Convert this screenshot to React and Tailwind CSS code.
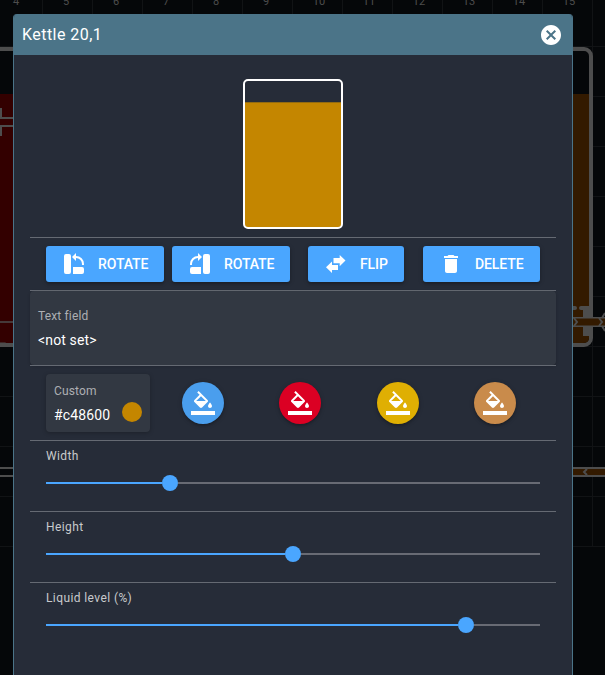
import React from "react";

const PATHS = {
  rotateLeft:
    "M4,2H7A2,2 0 0,1 9,4V20A2,2 0 0,1 7,22H4A2,2 0 0,1 2,20V4A2,2 0 0,1 4,2M20,15A2,2 0 0,1 22,17V20A2,2 0 0,1 20,22H11V15H20M14,4A8,8 0 0,1 22,12L21.94,13H19.92L20,12A6,6 0 0,0 14,6V9L10,5L14,1V4Z",
  rotateRight:
    "M10,4V1L14,5L10,9V6A6,6 0 0,0 4,12L4.08,13H2.06L2,12A8,8 0 0,1 10,4M17,2H20A2,2 0 0,1 22,4V20A2,2 0 0,1 20,22H17A2,2 0 0,1 15,20V4A2,2 0 0,1 17,2M4,15H13V22H4A2,2 0 0,1 2,20V17A2,2 0 0,1 4,15Z",
  flip: "M8,9.5V13H14V18H8V21L2,15.2ZM21.5,8.6L15.7,3V6H9.5V11.2H15.7V14.2Z",
  trash: "M6 19c0 1.1.9 2 2 2h8c1.100 0 2-.9 2-2V7H6v12zM19 4h-3.500l-1-1h-5l-1 1H5v2h14V4z",
  fill: "M16.560 8.940L7.620 0 6.210 1.410l2.380 2.380-5.150 5.150c-.59.59-.59 1.540 0 2.120l5.500 5.500c.29.29.68.44 1.060.44s.77-.15 1.060-.44l5.500-5.500c.59-.58.59-1.530 0-2.120zM5.210 10L10 5.210 14.790 10H5.210zM19 11.500s-2 2.170-2 3.500c0 1.100.9 2 2 2s2-.9 2-2c0-1.330-2-3.500-2-3.500zM0 20h24v4H0z",
  close:
    "M12 2C6.470 2 2 6.470 2 12s4.470 10 10 10 10-4.470 10-10S17.530 2 12 2zm5 13.590L15.590 17 12 13.410 8.410 17 7 15.590 10.590 12 7 8.410 8.410 7 12 10.590 15.590 7 17 8.410 13.410 12 17 15.590z",
};

function Icon({ name, className = "size-6" }) {
  return (
    <svg viewBox="0 0 24 24" className={`${className} shrink-0 fill-current`}>
      <path d={PATHS[name]} />
    </svg>
  );
}

// Dimmed brewery plan behind the dialog.
function Plan() {
  const cols = Array.from({ length: 12 }, (_, i) => i);
  return (
    <svg className="absolute inset-0" width="605" height="675" viewBox="0 0 605 675">
      <rect width="605" height="675" fill="#050709" />
      {cols.map((i) => (
        <rect key={i} x={42 + i * 50} y="0" width="1" height="546" fill="#111315" />
      ))}
      {cols.slice(0, 11).map((i) => (
        <rect key={i} x="0" y={46 + i * 50} width="605" height="1" fill="#111315" />
      ))}
      {cols.map((i) => (
        <text key={i} x={16 + i * 50 + (i > 5 ? 3 : 0)} y="5" textAnchor="middle" fontSize="11" fill="#4d4d4d" fontFamily="Roboto">
          {i + 4}
        </text>
      ))}
      <g>
        <rect x="-100" y="49" width="130" height="296" rx="7" fill="#050709" stroke="#4d4d4d" strokeWidth="4" />
        <rect x="0" y="94" width="20" height="249" fill="#330000" />
        <path d="M1 108V118H14M1 136V126H14" fill="none" stroke="#4d4d4d" strokeWidth="2" />
        <path d="M0 322H14" stroke="#4d4d4d" strokeWidth="1.500" />
        <path d="M0 343H5L14 346" fill="none" stroke="#4d4d4d" strokeWidth="1" />
        <path d="M0 468H14M0 476H14" stroke="#4d4d4d" strokeWidth="2" />
      </g>
      <g>
        <rect x="450" y="49" width="141" height="296" rx="7" fill="#050709" stroke="#4d4d4d" strokeWidth="4" />
        <path d="M560 94H589V306H560ZM560 306H583V343H560ZM583 336H589V338Q589 343 583 343Z" fill="#331a00" />
        <path d="M570 308H575M581 308H589" stroke="#4d4d4d" strokeWidth="4" strokeLinecap="round" />
        <path d="M583 306H590V336H583Z" fill="#4d4d4d" />
        <path d="M573 317H605V327H573Z" fill="#4d4d4d" />
        <path d="M573 318.500H605V325.500H573Z" fill="#331a00" />
        <path d="M574 318L577 322L574 326M599 318L602 322L599 326" fill="none" stroke="#4d4d4d" strokeWidth="2" />
        <path d="M605 313L602 318M605 331L602 326" stroke="#4d4d4d" strokeWidth="2" />
        <rect x="565" y="467" width="40" height="10" fill="#4d4d4d" />
        <rect x="565" y="469" width="40" height="6" fill="#331a00" />
        <path d="M587 469L584 472L587 475" fill="none" stroke="#4d4d4d" strokeWidth="2" />
      </g>
    </svg>
  );
}

function ActionButton({ icon, label, className }) {
  return (
    <button
      className={`flex h-9 items-center rounded-[3px] bg-[#4aa6ff] pl-4 text-[14px] font-medium tracking-[-0.1px] shadow-[0_1px_5px_rgba(0,0,0,0.2),0_2px_2px_rgba(0,0,0,0.14)] ${className}`}
    >
      <Icon name={icon} />
      <span className="ml-3">{label}</span>
    </button>
  );
}

function ColorButton({ className }) {
  return (
    <button
      className={`flex size-[42px] items-center justify-center rounded-full shadow-[0_1px_5px_rgba(0,0,0,0.2),0_2px_2px_rgba(0,0,0,0.14)] ${className}`}
    >
      <Icon name="fill" />
    </button>
  );
}

function SliderRow({ label, percent }) {
  return (
    <div className="h-[71px] border-t border-[#656a73] px-4 pt-[7px]">
      <div className="h-4 text-[12px] leading-4 tracking-[0.4px] text-[#c8cacc]">{label}</div>
      <div className="mt-[11px] flex h-4 items-center">
        <div className="h-0.5 bg-[#4aa6ff]" style={{ width: `calc(${percent}% - 8px)` }} />
        <div className="size-4 shrink-0 rounded-full bg-[#4aa6ff]" />
        <div className="h-0.5 flex-1 bg-[#686b74]" />
      </div>
    </div>
  );
}

export default function App() {
  return (
    <div className="relative h-[675px] w-[605px] overflow-hidden pl-[13px] pt-[14px] font-['Roboto',sans-serif] text-white">
      <Plan />
      <div className="relative h-[680px] w-[560px] overflow-hidden rounded-t border-x border-[#4b7488] bg-[#262c38]">
        <header className="flex h-[41px] items-center justify-between bg-[#4b7488] pl-2 pr-[9px]">
          <h1 className="text-[16px] font-normal tracking-[0.45px]">Kettle 20,1</h1>
          <Icon name="close" className="size-6" />
        </header>
        <main className="mx-4 pt-6">
          <div className="flex h-[158px] justify-center">
            <svg width="100" height="150" viewBox="0 0 100 150">
              <rect x="2" y="23.300" width="96" height="125" fill="#c48600" />
              <rect x="1" y="1" width="98" height="148" rx="4" fill="none" stroke="#fff" strokeWidth="2" />
            </svg>
          </div>
          <div className="flex h-[53px] border-t border-[#656a73] px-4 pt-2">
            <ActionButton icon="rotateLeft" label="ROTATE" className="w-[118px]" />
            <ActionButton icon="rotateRight" label="ROTATE" className="ml-2 w-[118px]" />
            <ActionButton icon="flip" label="FLIP" className="ml-[18px] w-24" />
            <ActionButton icon="trash" label="DELETE" className="ml-[19px] w-[117px]" />
          </div>
          <div className="h-[75px] border-t border-[#656a73]">
            <div className="h-[74px] rounded bg-[#323842] px-2 pt-4 shadow-[0_1px_3px_rgba(0,0,0,0.2)]">
              <div className="text-[12px] leading-[18px] tracking-[0.15px] text-[#adafb3]">Text field</div>
              <div className="mt-[3px] text-[14px] leading-6 tracking-[0.14px]">&lt;not set&gt;</div>
            </div>
          </div>
          <div className="flex h-[75px] border-t border-[#656a73] px-4 pt-2">
            <div className="flex h-[58px] w-[104px] justify-between rounded bg-[#323842] px-2 shadow-[0_1px_4px_rgba(0,0,0,0.25)]">
              <div className="pt-2">
                <div className="text-[12px] leading-[18px] tracking-[0.15px] text-[#adafb3]">Custom</div>
                <div className="mt-[3px] text-[14px] leading-6 tracking-[0.14px]">#c48600</div>
              </div>
              <div className="mt-7 size-5 rounded-full bg-[#c48600]" />
            </div>
            <div className="ml-8 mr-6 mt-2 flex flex-1 justify-between">
              <ColorButton className="bg-[#4a9eed]" />
              <ColorButton className="bg-[#db0023]" />
              <ColorButton className="bg-[#dfaf03]" />
              <ColorButton className="bg-[#c98b4b]" />
            </div>
          </div>
          <SliderRow label="Width" percent={25.1} />
          <SliderRow label="Height" percent={50} />
          <SliderRow label="Liquid level (%)" percent={85.1} />
        </main>
      </div>
    </div>
  );
}
